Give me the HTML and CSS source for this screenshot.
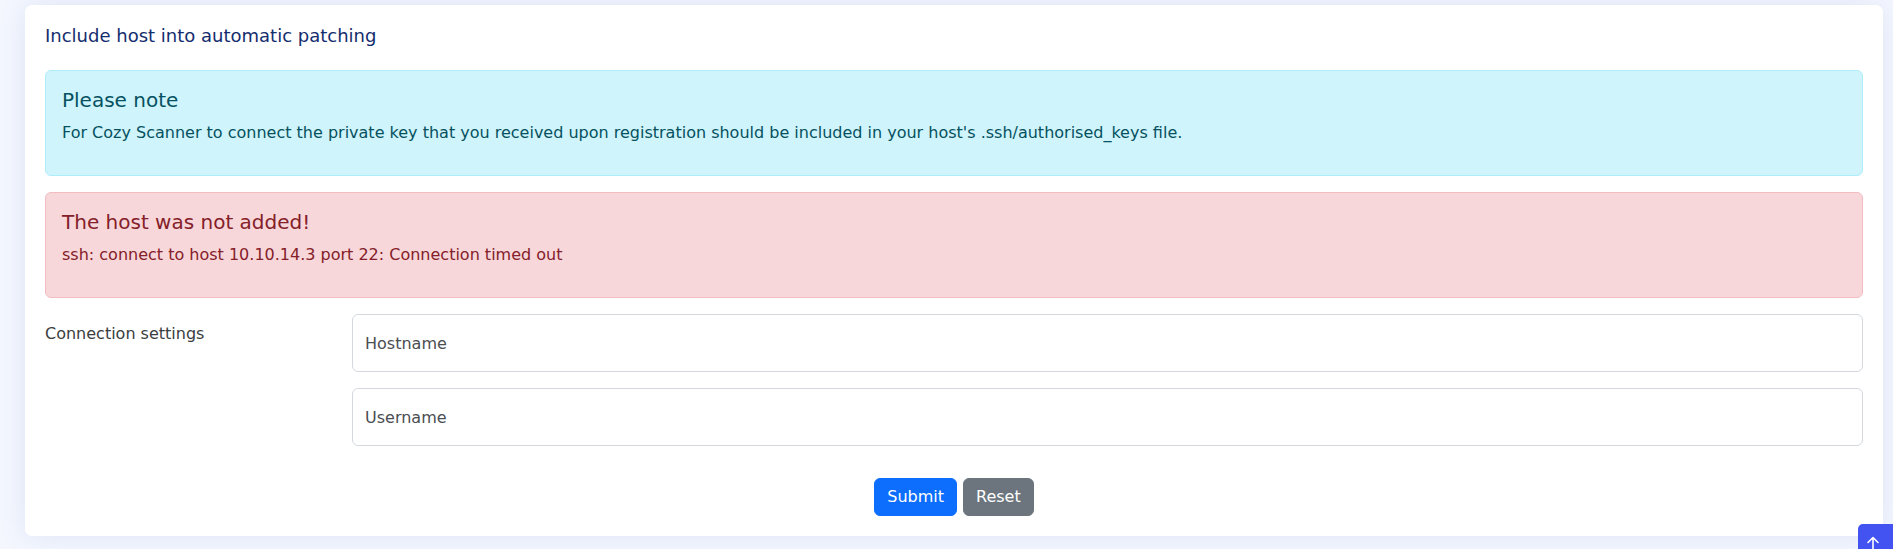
FILE: index.html
```html
<!DOCTYPE html>
<html lang="en">
<head>
<meta charset="utf-8">
<title>Include host into automatic patching</title>
<link rel="stylesheet" href="styles.css">
</head>
<body>
<div class="page">
  <section class="card">
    <h4 class="card-title">Include host into automatic patching</h4>

    <div class="alert alert-info">
      <h4 class="alert-heading">Please note</h4>
      <p>For Cozy Scanner to connect the private key that you received upon registration should be included in your host's .ssh/authorised_keys file.</p>
    </div>

    <div class="alert alert-danger">
      <h4 class="alert-heading">The host was not added!</h4>
      <p>ssh: connect to host 10.10.14.3 port 22: Connection timed out</p>
    </div>

    <form class="form" onsubmit="return false">
      <div class="form-row">
        <label class="col-label">Connection settings</label>
        <div class="fields">
          <input class="form-control" type="text" placeholder="Hostname">
          <input class="form-control" type="text" placeholder="Username">
        </div>
      </div>
      <div class="actions">
        <button type="submit" class="btn btn-primary">Submit</button>
        <button type="reset" class="btn btn-secondary">Reset</button>
      </div>
    </form>
  </section>
</div>

<button class="scroll-top" aria-label="Back to top">
  <svg width="16" height="16" viewBox="0 0 16 16" fill="none" stroke="#fff" stroke-width="1.6" stroke-linecap="round" stroke-linejoin="round"><path d="M8 14V2.5M3 7.5l5-5 5 5"/></svg>
</button>
</body>
</html>
```

FILE: styles.css
```css
* { box-sizing: border-box; }

html, body {
  margin: 0;
  height: 100%;
}

body {
  background: #f4f7fe;
  font-family: "DejaVu Sans", "Noto Sans", sans-serif;
  font-size: 16px;
  line-height: 24px;
  color: #212529;
  overflow: hidden;
}

.page {
  padding: 5px 10px 0 25px;
}

.card {
  background: #fff;
  border-radius: 7px;
  padding: 20px 20px 20px;
  box-shadow: 0 0 28px rgba(70, 100, 190, 0.13);
}

.card-title {
  margin: 0 0 23px;
  font-size: 18px;
  line-height: 22px;
  font-weight: normal;
  color: #142d6e;
}

.alert {
  border: 1px solid transparent;
  border-radius: 6px;
  padding: 17px 16px 16px;
  margin-bottom: 16px;
}

.alert-heading {
  margin: 0 0 9px;
  font-size: 20px;
  line-height: 24px;
  font-weight: normal;
}

.alert p {
  margin: 0 0 14px;
}

.alert-info {
  background: #cff4fc;
  border-color: #aeeefa;
  color: #055160;
}

.alert-danger {
  background: #f8d7da;
  border-color: #f3bcc1;
  color: #842029;
}

.form-row {
  display: flex;
}

.col-label {
  width: 307px;
  flex-shrink: 0;
  padding-top: 8px;
  color: #3b3d40;
}

.fields {
  flex: 1;
  display: flex;
  flex-direction: column;
  gap: 16px;
}

.form-control {
  display: block;
  width: 100%;
  height: 58px;
  border: 1px solid #d5d9de;
  border-radius: 6px;
  padding: 0 12px;
  font-family: inherit;
  font-size: 16px;
  color: #212529;
  background: #fff;
  outline: none;
}

.form-control::placeholder {
  color: #4a4d51;
  opacity: 1;
}

.actions {
  margin-top: 32px;
  display: flex;
  justify-content: center;
  gap: 6px;
}

.btn {
  font-family: inherit;
  font-size: 16px;
  line-height: 24px;
  padding: 6px 12px;
  border: 1px solid transparent;
  border-radius: 6px;
  color: #fff;
  cursor: pointer;
}

.btn-primary {
  background: #0d6efd;
  border-color: #0d6efd;
}

.btn-secondary {
  background: #6c757d;
  border-color: #6c757d;
}

.scroll-top {
  position: fixed;
  left: 1858px;
  top: 524px;
  width: 44px;
  height: 44px;
  border: none;
  border-radius: 5px;
  background: #4353f2;
  padding: 0;
  display: flex;
  align-items: flex-start;
  justify-content: center;
  padding-top: 11px;
  padding-right: 14px;
}
```
